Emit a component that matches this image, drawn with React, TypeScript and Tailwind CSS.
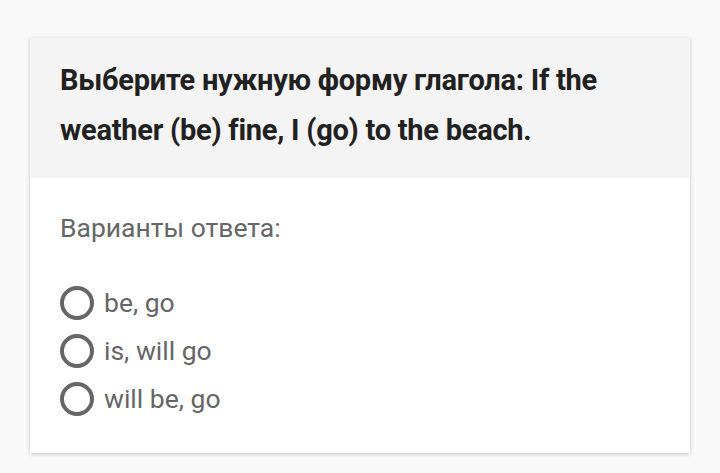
import React from "react";

const options = ["be, go", "is, will go", "will be, go"];

export default function App() {
  return (
    <div
      className="w-[720px] h-[473px] bg-[#f9f9f9] pt-[38px] px-[30px]"
      style={{ fontFamily: "Roboto, 'Noto Sans', sans-serif" }}
    >
      <div className="w-[660px] h-[415px] bg-white shadow-[0_1px_4px_rgba(0,0,0,0.22)] flex flex-col">
        <div className="bg-[#f4f4f4] h-[140px] px-[30px] pt-[17px]">
          <div className="text-[29px] leading-[50px] font-bold text-[#212121] tracking-[-0.25px]">
            Выберите нужную форму глагола: If the weather (be) fine, I (go) to the beach.
          </div>
        </div>
        <div className="px-[30px] pt-[33px]">
          <div className="text-[26.5px] leading-[34px] text-[#666]">Варианты ответа:</div>
          <div className="mt-[34px] flex flex-col">
            {options.map((o) => (
              <div key={o} className="flex items-center h-[48px]">
                <div className="w-[34px] h-[34px] rounded-full border-[4px] border-[#666] mr-[10px]" />
                <span className="text-[26.5px] text-[#666]">{o}</span>
              </div>
            ))}
          </div>
        </div>
      </div>
    </div>
  );
}
